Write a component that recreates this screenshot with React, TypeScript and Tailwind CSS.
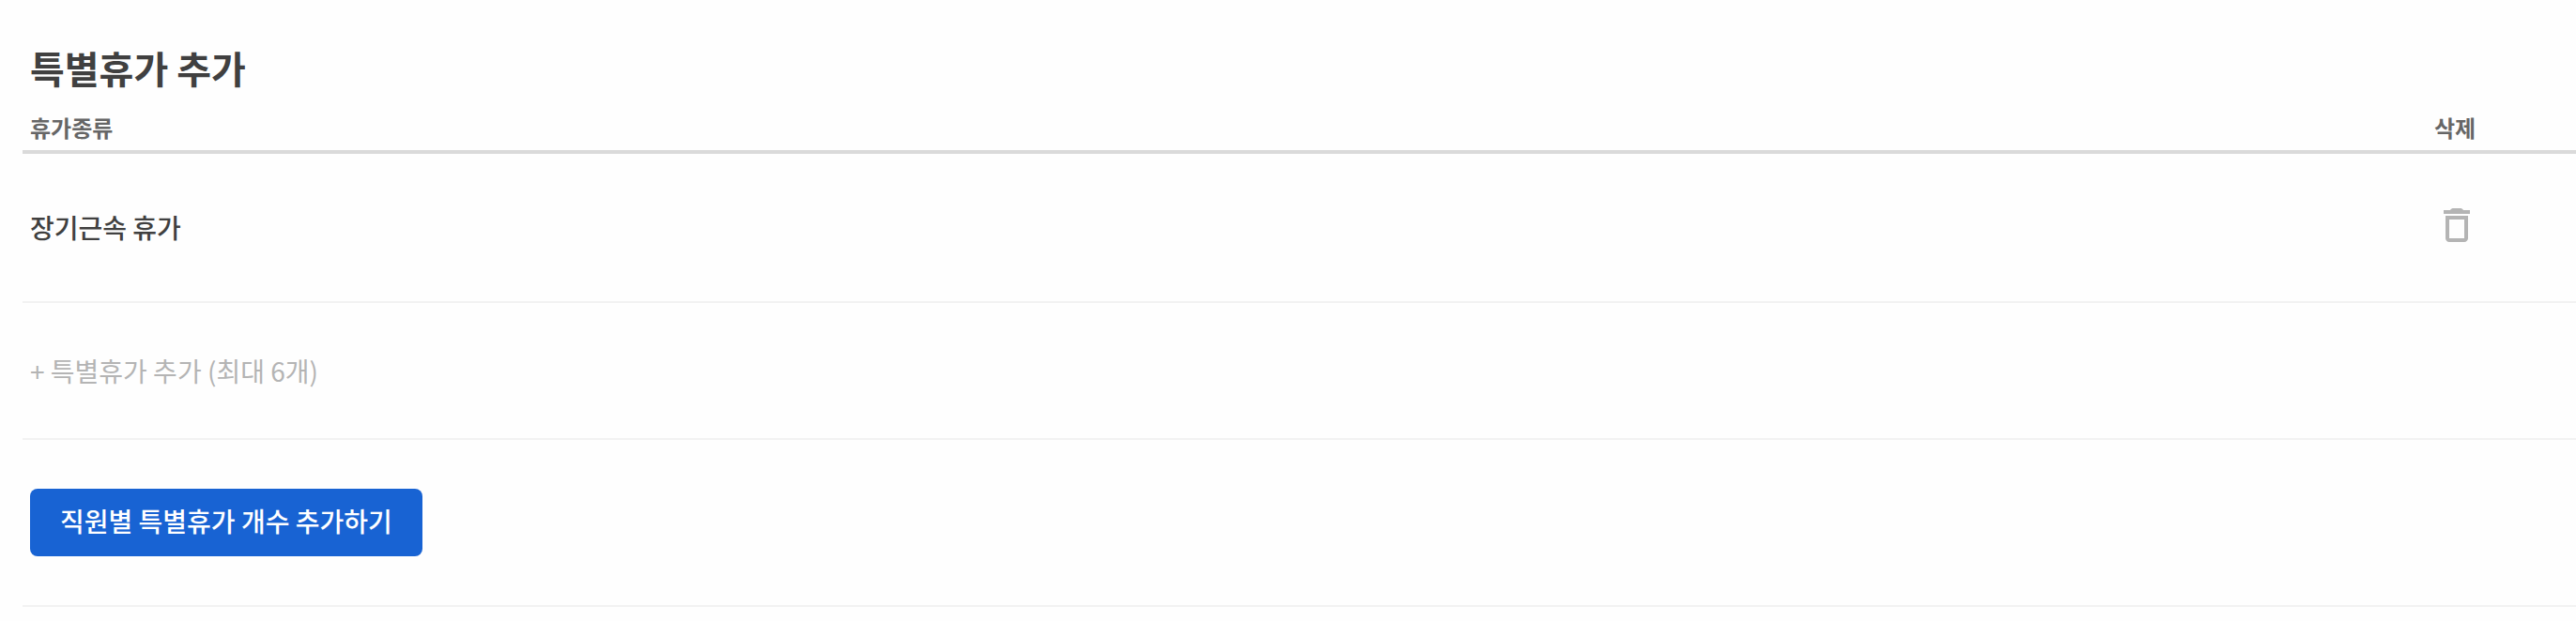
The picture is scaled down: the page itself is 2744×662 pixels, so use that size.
import React from "react";

const leaveTypes = [{ id: 1, name: "장기근속 휴가" }];

const SpecialLeave = () => {
  return (
    <main className="min-h-screen w-full bg-[#fefefe] pl-6 pt-[46px] font-['Noto_Sans_CJK_KR',sans-serif] text-[#404040]">
      <h1 className="pl-2 text-[40px] leading-[52px] font-bold">특별휴가 추가</h1>
      <table className="w-full border-separate border-spacing-0 text-left">
        <thead>
          <tr className="h-[66px] text-2xl text-[#666]">
            <th className="border-b-4 border-[#dadada] pl-2 pt-3.5 font-bold">휴가종류</th>
            <th className="w-[151px] border-b-4 border-[#dadada] pt-3.5 font-bold">삭제</th>
          </tr>
        </thead>
        <tbody>
          {leaveTypes.map((leave) => (
            <tr key={leave.id} className="h-[159px]">
              <td className="border-b-2 border-[#f2f2f2] pb-0.5 pl-2 text-[28px] font-medium">
                {leave.name}
              </td>
              <td className="border-b-2 border-[#f2f2f2] pb-1.5">
                <button type="button" aria-label="삭제" className="block text-[#b4b4b4]">
                  <svg viewBox="0 0 24 24" className="size-12" fill="currentColor">
                    <path d="M5 4h3.500c.5-.7 1-1 1.800-1h3.400c.8 0 1.300.3 1.800 1H19v2H5z" />
                    <path d="M16 9v10H8V9h8m2-2H6v12c0 1.100.9 2 2 2h8c1.100 0 2-.9 2-2V7z" />
                  </svg>
                </button>
              </td>
            </tr>
          ))}
        </tbody>
      </table>
      <div className="flex h-[146px] items-center border-b-2 border-[#f2f2f2] pl-2">
        <button type="button" className="text-[28px] text-[#b4b4b4]">
          + 특별휴가 추가 (최대 6개)
        </button>
      </div>
      <div className="flex h-[178px] items-center border-b-2 border-[#f2f2f2] pl-2">
        <button
          type="button"
          className="h-[72px] rounded-lg bg-[#1863d3] px-8 pb-1 text-[28px] font-medium text-white"
        >
          직원별 특별휴가 개수 추가하기
        </button>
      </div>
    </main>
  );
};

export default SpecialLeave;
